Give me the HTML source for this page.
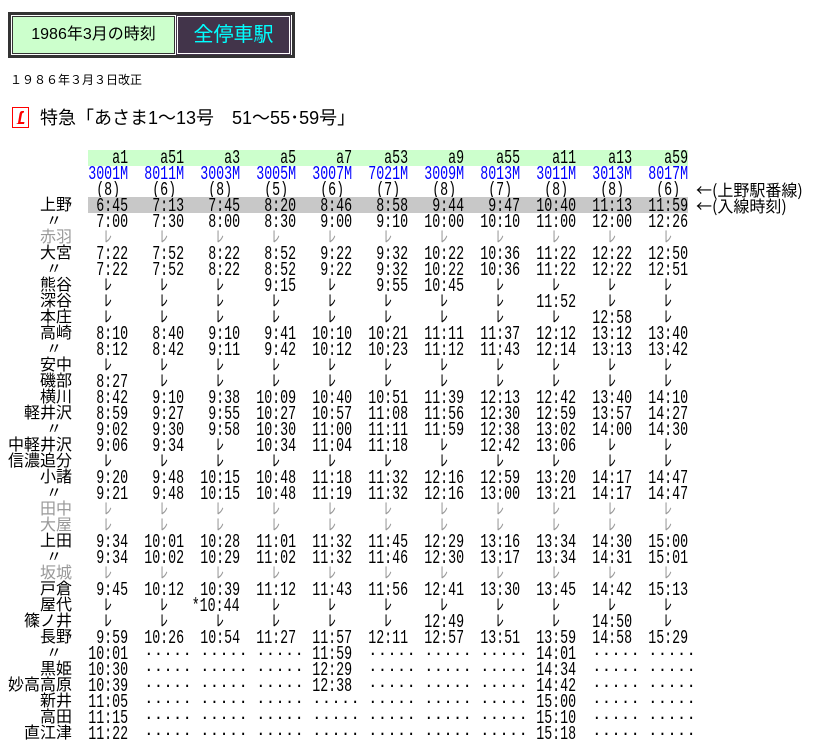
<!DOCTYPE html>
<html><head><meta charset="utf-8"><style>
body{margin:0;background:#fff;width:820px;height:742px;position:relative;overflow:hidden;font-family:"Liberation Sans","Noto Sans CJK JP",sans-serif;color:#000}
.box{position:absolute;left:8px;top:12px;width:281px;height:40px;border:3px solid #333;background:#fff}
.g{position:absolute;left:1px;top:1px;width:161px;height:36px;background:#ccffcc;border:1px solid #333;font-size:16px;line-height:36px;text-align:center}
.p{position:absolute;left:166px;top:1px;width:111px;height:36px;background:#42344a;border:1px solid #fff;outline:1px solid #42344a;color:#00ffff;font-size:20px;line-height:36px;text-align:center}
.date{position:absolute;left:10px;top:72px;font-size:12px;line-height:16px}
.icon{position:absolute;left:12px;top:107px;width:17px;height:21px;border:1px solid #f00;box-sizing:border-box}
.ttl{position:absolute;left:40px;top:107px;font-size:18px;line-height:22px}
.tb{position:absolute;left:0;top:150px;width:820px}
.r{height:16px;display:flex;font-size:16px;line-height:16px;white-space:pre;position:relative}
.s{width:72px;text-align:right;flex:none;font-family:"Liberation Sans","Noto Sans CJK JP",sans-serif}
.s.d{padding-right:10px;width:62px}
.gr .s,.gr i{color:#999}
.r i,.r b,.r em{font-style:normal;font-weight:normal;width:40px;margin-left:16px;flex:none;text-align:right;font-family:"Liberation Mono","Noto Sans CJK JP",monospace}
.r i{font-size:19px;width:57.14px;margin-left:-1.14px;transform:scaleX(0.7);transform-origin:right center}
.r i.w{width:68.6px;margin-left:-12.6px}
.r b,.r em{text-align:center}
.gr b{color:#999}
.bl i{color:#0000ff}
.note{position:absolute;left:696px;font-size:16px;line-height:16px;font-family:"Noto Sans CJK JP",sans-serif}
</style></head><body>
<div class="box"><div class="g">1986年3月の時刻</div><div class="p">全停車駅</div></div>
<div class="date">１９８６年３月３日改正</div>
<div class="icon"><svg width="15" height="19" viewBox="0 0 15 19"><path d="M9 3 Q7 3 6.5 6 L5 15 L3 16 L11 16 L11.5 14 L7.5 14 L9 6 Q9.5 4.5 11 4.5 L11 3 Z" fill="#f00"/></svg></div>
<div class="ttl">特急「あさま1～13号　51～55･59号」</div>
<div class="note" style="top:181px">←(上野駅番線)</div>
<div class="note" style="top:197px">←(入線時刻)</div>
<div class="tb">
<div class="r" style="margin-left:72px;width:616px"><span style="position:absolute;left:16px;top:0;width:600px;height:16px;background:#ccffcc"></span></div>
<div class="r" style="margin-top:-16px"><span class="s"></span><i>a1</i><i>a51</i><i>a3</i><i>a5</i><i>a7</i><i>a53</i><i>a9</i><i>a55</i><i>a11</i><i>a13</i><i>a59</i></div>
<div class="r bl"><span class="s"></span><i>3001M</i><i>8011M</i><i>3003M</i><i>3005M</i><i>3007M</i><i>7021M</i><i>3009M</i><i>8013M</i><i>3011M</i><i>3013M</i><i>8017M</i></div>
<div class="r"><span class="s"></span><i>(8) </i><i>(6) </i><i>(8) </i><i>(5) </i><i>(6) </i><i>(7) </i><i>(8) </i><i>(7) </i><i>(8) </i><i>(8) </i><i>(6) </i></div>
<div class="r"><span style="position:absolute;left:88px;top:-1px;width:600px;height:16px;background:#c8c8c8"></span><span class="s" style="position:relative">上野</span><i>6:45</i><i>7:13</i><i>7:45</i><i>8:20</i><i>8:46</i><i>8:58</i><i>9:44</i><i>9:47</i><i>10:40</i><i>11:13</i><i>11:59</i></div>
<div class="r"><span class="s d">〃</span><i>7:00</i><i>7:30</i><i>8:00</i><i>8:30</i><i>9:00</i><i>9:10</i><i>10:00</i><i>10:10</i><i>11:00</i><i>12:00</i><i>12:26</i></div>
<div class="r gr"><span class="s">赤羽</span><b>ﾚ</b><b>ﾚ</b><b>ﾚ</b><b>ﾚ</b><b>ﾚ</b><b>ﾚ</b><b>ﾚ</b><b>ﾚ</b><b>ﾚ</b><b>ﾚ</b><b>ﾚ</b></div>
<div class="r"><span class="s">大宮</span><i>7:22</i><i>7:52</i><i>8:22</i><i>8:52</i><i>9:22</i><i>9:32</i><i>10:22</i><i>10:36</i><i>11:22</i><i>12:22</i><i>12:50</i></div>
<div class="r"><span class="s d">〃</span><i>7:22</i><i>7:52</i><i>8:22</i><i>8:52</i><i>9:22</i><i>9:32</i><i>10:22</i><i>10:36</i><i>11:22</i><i>12:22</i><i>12:51</i></div>
<div class="r"><span class="s">熊谷</span><b>ﾚ</b><b>ﾚ</b><b>ﾚ</b><i>9:15</i><b>ﾚ</b><i>9:55</i><i>10:45</i><b>ﾚ</b><b>ﾚ</b><b>ﾚ</b><b>ﾚ</b></div>
<div class="r"><span class="s">深谷</span><b>ﾚ</b><b>ﾚ</b><b>ﾚ</b><b>ﾚ</b><b>ﾚ</b><b>ﾚ</b><b>ﾚ</b><b>ﾚ</b><i>11:52</i><b>ﾚ</b><b>ﾚ</b></div>
<div class="r"><span class="s">本庄</span><b>ﾚ</b><b>ﾚ</b><b>ﾚ</b><b>ﾚ</b><b>ﾚ</b><b>ﾚ</b><b>ﾚ</b><b>ﾚ</b><b>ﾚ</b><i>12:58</i><b>ﾚ</b></div>
<div class="r"><span class="s">高崎</span><i>8:10</i><i>8:40</i><i>9:10</i><i>9:41</i><i>10:10</i><i>10:21</i><i>11:11</i><i>11:37</i><i>12:12</i><i>13:12</i><i>13:40</i></div>
<div class="r"><span class="s d">〃</span><i>8:12</i><i>8:42</i><i>9:11</i><i>9:42</i><i>10:12</i><i>10:23</i><i>11:12</i><i>11:43</i><i>12:14</i><i>13:13</i><i>13:42</i></div>
<div class="r"><span class="s">安中</span><b>ﾚ</b><b>ﾚ</b><b>ﾚ</b><b>ﾚ</b><b>ﾚ</b><b>ﾚ</b><b>ﾚ</b><b>ﾚ</b><b>ﾚ</b><b>ﾚ</b><b>ﾚ</b></div>
<div class="r"><span class="s">磯部</span><i>8:27</i><b>ﾚ</b><b>ﾚ</b><b>ﾚ</b><b>ﾚ</b><b>ﾚ</b><b>ﾚ</b><b>ﾚ</b><b>ﾚ</b><b>ﾚ</b><b>ﾚ</b></div>
<div class="r"><span class="s">横川</span><i>8:42</i><i>9:10</i><i>9:38</i><i>10:09</i><i>10:40</i><i>10:51</i><i>11:39</i><i>12:13</i><i>12:42</i><i>13:40</i><i>14:10</i></div>
<div class="r"><span class="s">軽井沢</span><i>8:59</i><i>9:27</i><i>9:55</i><i>10:27</i><i>10:57</i><i>11:08</i><i>11:56</i><i>12:30</i><i>12:59</i><i>13:57</i><i>14:27</i></div>
<div class="r"><span class="s d">〃</span><i>9:02</i><i>9:30</i><i>9:58</i><i>10:30</i><i>11:00</i><i>11:11</i><i>11:59</i><i>12:38</i><i>13:02</i><i>14:00</i><i>14:30</i></div>
<div class="r"><span class="s">中軽井沢</span><i>9:06</i><i>9:34</i><b>ﾚ</b><i>10:34</i><i>11:04</i><i>11:18</i><b>ﾚ</b><i>12:42</i><i>13:06</i><b>ﾚ</b><b>ﾚ</b></div>
<div class="r"><span class="s">信濃追分</span><b>ﾚ</b><b>ﾚ</b><b>ﾚ</b><b>ﾚ</b><b>ﾚ</b><b>ﾚ</b><b>ﾚ</b><b>ﾚ</b><b>ﾚ</b><b>ﾚ</b><b>ﾚ</b></div>
<div class="r"><span class="s">小諸</span><i>9:20</i><i>9:48</i><i>10:15</i><i>10:48</i><i>11:18</i><i>11:32</i><i>12:16</i><i>12:59</i><i>13:20</i><i>14:17</i><i>14:47</i></div>
<div class="r"><span class="s d">〃</span><i>9:21</i><i>9:48</i><i>10:15</i><i>10:48</i><i>11:19</i><i>11:32</i><i>12:16</i><i>13:00</i><i>13:21</i><i>14:17</i><i>14:47</i></div>
<div class="r gr"><span class="s">田中</span><b>ﾚ</b><b>ﾚ</b><b>ﾚ</b><b>ﾚ</b><b>ﾚ</b><b>ﾚ</b><b>ﾚ</b><b>ﾚ</b><b>ﾚ</b><b>ﾚ</b><b>ﾚ</b></div>
<div class="r gr"><span class="s">大屋</span><b>ﾚ</b><b>ﾚ</b><b>ﾚ</b><b>ﾚ</b><b>ﾚ</b><b>ﾚ</b><b>ﾚ</b><b>ﾚ</b><b>ﾚ</b><b>ﾚ</b><b>ﾚ</b></div>
<div class="r"><span class="s">上田</span><i>9:34</i><i>10:01</i><i>10:28</i><i>11:01</i><i>11:32</i><i>11:45</i><i>12:29</i><i>13:16</i><i>13:34</i><i>14:30</i><i>15:00</i></div>
<div class="r"><span class="s d">〃</span><i>9:34</i><i>10:02</i><i>10:29</i><i>11:02</i><i>11:32</i><i>11:46</i><i>12:30</i><i>13:17</i><i>13:34</i><i>14:31</i><i>15:01</i></div>
<div class="r gr"><span class="s">坂城</span><b>ﾚ</b><b>ﾚ</b><b>ﾚ</b><b>ﾚ</b><b>ﾚ</b><b>ﾚ</b><b>ﾚ</b><b>ﾚ</b><b>ﾚ</b><b>ﾚ</b><b>ﾚ</b></div>
<div class="r"><span class="s">戸倉</span><i>9:45</i><i>10:12</i><i>10:39</i><i>11:12</i><i>11:43</i><i>11:56</i><i>12:41</i><i>13:30</i><i>13:45</i><i>14:42</i><i>15:13</i></div>
<div class="r"><span class="s">屋代</span><b>ﾚ</b><b>ﾚ</b><i class="w">*10:44</i><b>ﾚ</b><b>ﾚ</b><b>ﾚ</b><b>ﾚ</b><b>ﾚ</b><b>ﾚ</b><b>ﾚ</b><b>ﾚ</b></div>
<div class="r"><span class="s">篠ノ井</span><b>ﾚ</b><b>ﾚ</b><b>ﾚ</b><b>ﾚ</b><b>ﾚ</b><b>ﾚ</b><i>12:49</i><b>ﾚ</b><b>ﾚ</b><i>14:50</i><b>ﾚ</b></div>
<div class="r"><span class="s">長野</span><i>9:59</i><i>10:26</i><i>10:54</i><i>11:27</i><i>11:57</i><i>12:11</i><i>12:57</i><i>13:51</i><i>13:59</i><i>14:58</i><i>15:29</i></div>
<div class="r"><span class="s d">〃</span><i>10:01</i><em>·····</em><em>·····</em><em>·····</em><i>11:59</i><em>·····</em><em>·····</em><em>·····</em><i>14:01</i><em>·····</em><em>·····</em></div>
<div class="r"><span class="s">黒姫</span><i>10:30</i><em>·····</em><em>·····</em><em>·····</em><i>12:29</i><em>·····</em><em>·····</em><em>·····</em><i>14:34</i><em>·····</em><em>·····</em></div>
<div class="r"><span class="s">妙高高原</span><i>10:39</i><em>·····</em><em>·····</em><em>·····</em><i>12:38</i><em>·····</em><em>·····</em><em>·····</em><i>14:42</i><em>·····</em><em>·····</em></div>
<div class="r"><span class="s">新井</span><i>11:05</i><em>·····</em><em>·····</em><em>·····</em><em>·····</em><em>·····</em><em>·····</em><em>·····</em><i>15:00</i><em>·····</em><em>·····</em></div>
<div class="r"><span class="s">高田</span><i>11:15</i><em>·····</em><em>·····</em><em>·····</em><em>·····</em><em>·····</em><em>·····</em><em>·····</em><i>15:10</i><em>·····</em><em>·····</em></div>
<div class="r"><span class="s">直江津</span><i>11:22</i><em>·····</em><em>·····</em><em>·····</em><em>·····</em><em>·····</em><em>·····</em><em>·····</em><i>15:18</i><em>·····</em><em>·····</em></div>
</div>
</body></html>
